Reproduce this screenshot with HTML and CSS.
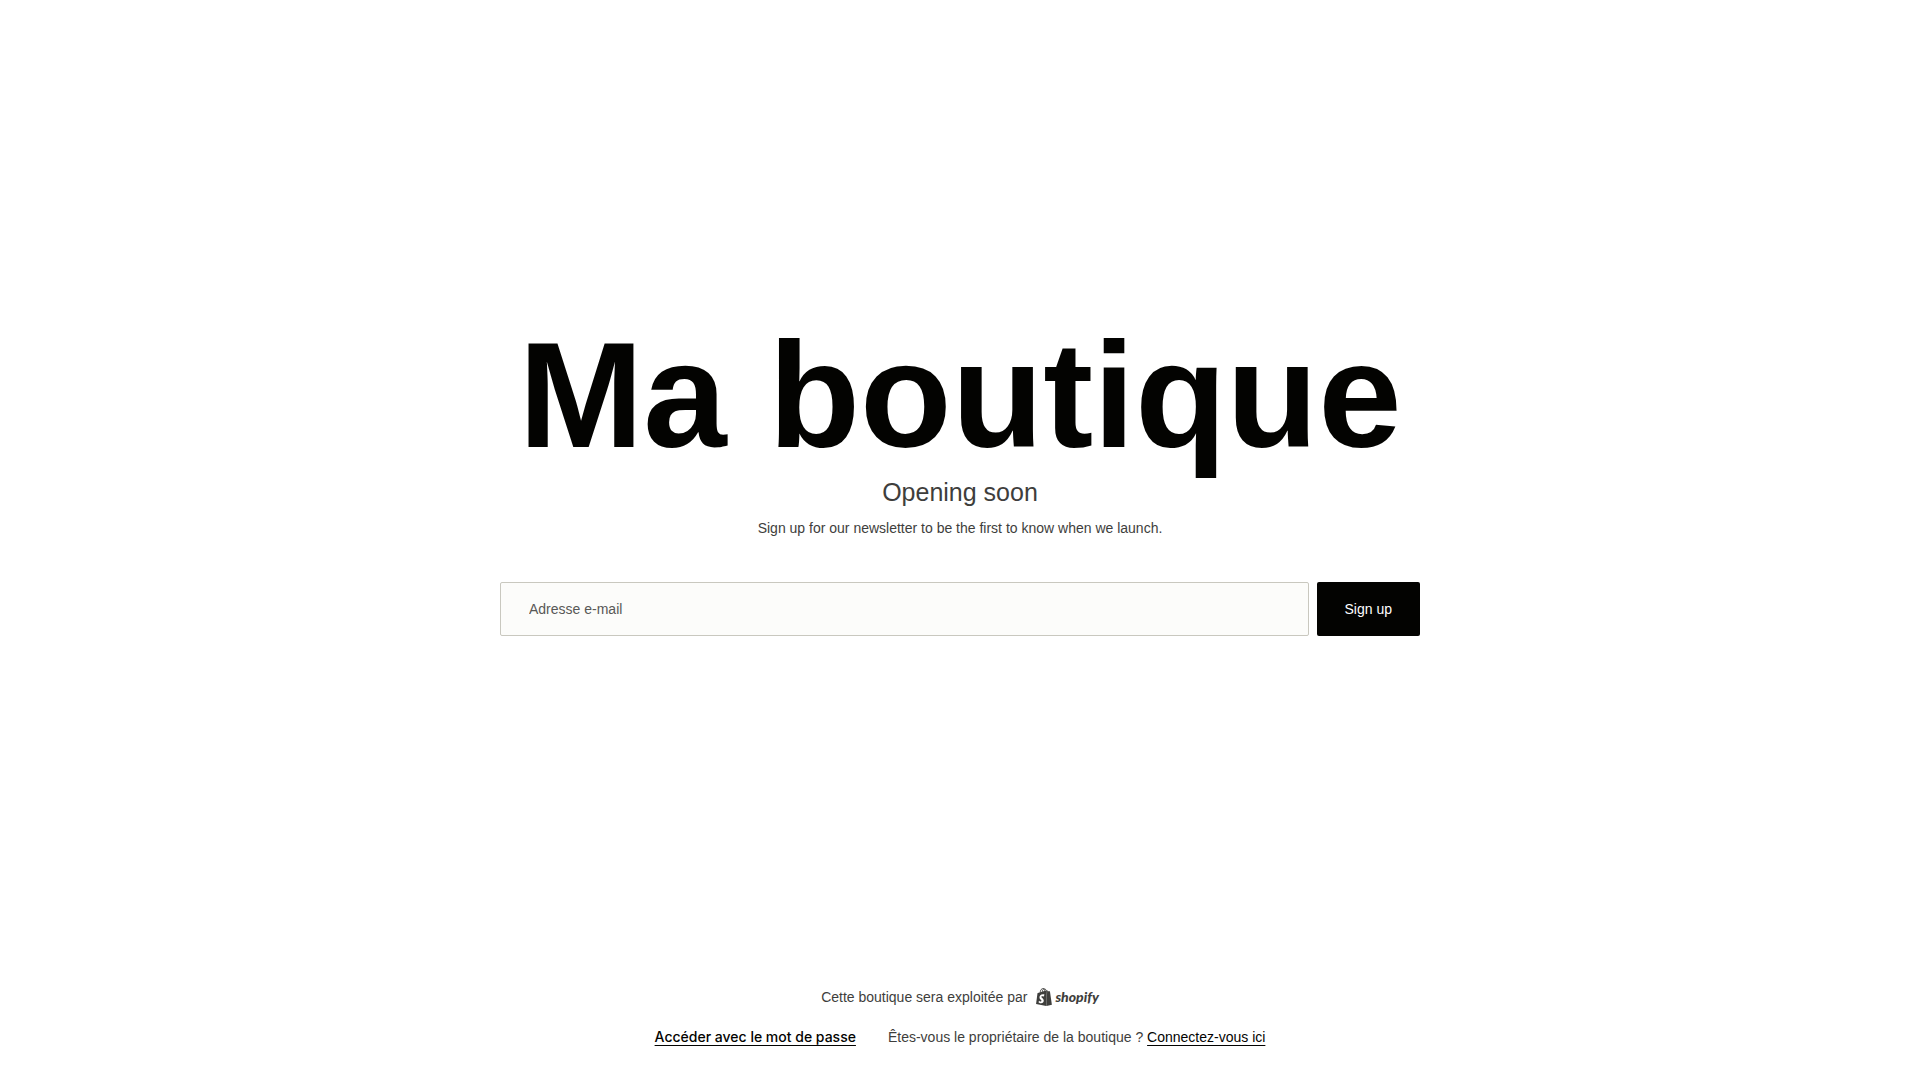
FILE: index.html
```html
<!DOCTYPE html>
<html lang="fr">
<head>
<meta charset="utf-8">
<meta name="viewport" content="width=device-width, initial-scale=1">
<title>Ma boutique</title>
<link rel="stylesheet" href="styles.css">
</head>
<body>
<main class="hero">
  <h1 class="hero-title">Ma boutique</h1>
  <p class="hero-lead">Opening soon</p>
  <p class="hero-text">Sign up for our newsletter to be the first to know when we launch.</p>
  <form class="signup">
    <input class="signup-input" type="email" aria-label="Adresse e-mail" placeholder="Adresse e-mail">
    <button class="signup-button" type="submit">Sign up</button>
  </form>
</main>
<footer class="footer">
  <p class="powered">Cette boutique sera exploitée par
    <a class="logo" href="#">
      <svg class="logo-bag" viewBox="0 0 24 24" aria-hidden="true"><path d="M15.337 23.979l7.216-1.561s-2.604-17.613-2.625-17.73c-.018-.116-.114-.192-.211-.192s-1.929-.136-1.929-.136-1.275-1.274-1.439-1.411c-.045-.037-.075-.057-.121-.074l-.914 21.104h.023zM11.71 11.305s-.81-.424-1.774-.424c-1.447 0-1.504.906-1.504 1.141 0 1.232 3.24 1.715 3.24 4.629 0 2.295-1.44 3.76-3.406 3.76-2.354 0-3.54-1.465-3.54-1.465l.646-2.086s1.245 1.066 2.28 1.066c.675 0 .975-.545.975-.932 0-1.619-2.654-1.694-2.654-4.359-.034-2.237 1.571-4.416 4.827-4.416 1.257 0 1.875.361 1.875.361l-.945 2.715-.02.01zM11.17.83c.136 0 .271.038.405.135-.984.465-2.064 1.639-2.508 3.992-.656.213-1.293.405-1.889.578C7.697 3.75 8.951.84 11.17.84V.83zm1.235 2.949v.135c-.754.232-1.583.484-2.394.736.466-1.777 1.333-2.645 2.085-2.971.193.501.309 1.176.309 2.1zm.539-2.234c.694.074 1.141.867 1.429 1.755-.349.114-.735.231-1.158.366v-.252c0-.752-.096-1.371-.271-1.871v.002zm2.992 1.289c-.02 0-.06.021-.078.021s-.289.075-.714.21c-.423-1.233-1.176-2.37-2.508-2.37h-.115C12.135.209 11.669 0 11.265 0 8.159 0 6.675 3.877 6.21 5.846c-1.194.365-2.063.636-2.16.674-.675.213-.694.232-.772.87-.075.462-1.83 14.063-1.83 14.063L15.009 24l.927-21.166z"/></svg>
      <span class="logo-name">shopify</span>
    </a>
  </p>
  <div class="access">
    <button class="password-link" type="button">Accéder avec le mot de passe</button>
    <p class="owner">Êtes-vous le propriétaire de la boutique ? <a class="owner-link" href="#">Connectez-vous ici</a></p>
  </div>
</footer>
</body>
</html>
```
FILE: styles.css
```css
* {
  box-sizing: border-box;
}

body {
  display: flex;
  flex-direction: column;
  min-height: 100vh;
  margin: 0;
  background: #fff;
  color: #3e3e3c;
  font: 14px/20px "Liberation Sans", Arial, sans-serif;
}

h1,
p {
  margin: 0;
}

.hero {
  display: flex;
  flex: 1;
  flex-direction: column;
  align-items: center;
  justify-content: center;
  padding: 0 24px 38px;
  text-align: center;
}

.hero-title {
  color: #030301;
  font-size: 150px;
  font-weight: 700;
  line-height: 162px;
}

.hero-lead {
  font-size: 25px;
  line-height: 32px;
}

.hero-text {
  margin-top: 10px;
}

.signup {
  display: flex;
  gap: 8px;
  width: 100%;
  max-width: 920px;
  margin-top: 44px;
}

.signup-input,
.signup-button {
  height: 54px;
  padding: 0 28px;
  border-radius: 2px;
  font: inherit;
}

.signup-input {
  flex: 1;
  min-width: 0;
  border: 1px solid #c9c8bf;
  background: #fcfcfa;
  color: #030301;
}

.signup-input::placeholder {
  color: #585856;
  opacity: 1;
}

.signup-button {
  border: 0;
  background: #030301;
  color: #fff;
}

.footer {
  display: flex;
  flex-direction: column;
  align-items: center;
  gap: 20px;
  padding: 0 24px 33px;
}

.powered,
.logo {
  display: flex;
  align-items: center;
}

.powered {
  gap: 8px;
}

.logo {
  gap: 2px;
  color: inherit;
  text-decoration: none;
}

.logo-bag {
  width: 18px;
  height: 18px;
  fill: currentColor;
}

.logo-name {
  font: italic 900 14px/20px Lato, sans-serif;
}

.access {
  display: flex;
  flex-wrap: wrap;
  justify-content: center;
  gap: 8px 32px;
}

.password-link {
  padding: 0;
  border: 0;
  background: none;
  color: #030301;
  font: 500 14px/20px Inter, sans-serif;
}

.password-link,
.owner-link {
  color: #030301;
  text-decoration: underline;
  text-underline-offset: 3px;
}
```
